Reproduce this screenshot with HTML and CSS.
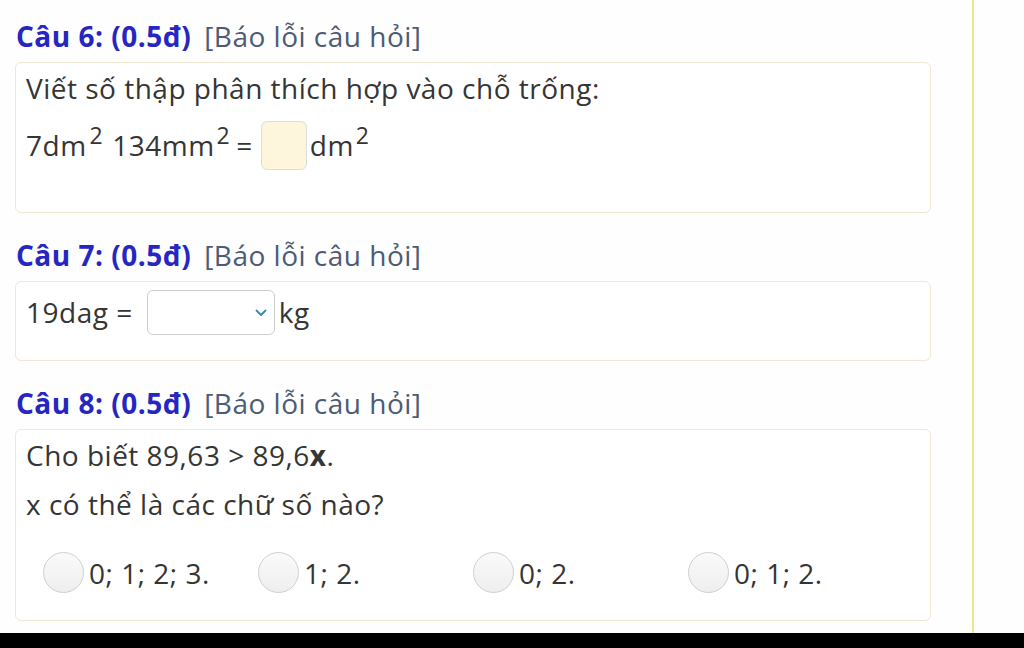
FILE: index.html
```html
<!DOCTYPE html>
<html lang="vi">
<head>
<meta charset="utf-8">
<title>Câu hỏi</title>
<link rel="stylesheet" href="styles.css">
</head>
<body>
<div class="page">
  <main class="content">
    <section class="question">
      <h3 class="q-title"><span class="q-num">Câu 6: (0.5đ)</span> <span class="q-report">[Báo lỗi câu hỏi]</span></h3>
      <div class="q-box q-box-6">
        <p class="q-line">Viết số thập phân thích hợp vào chỗ trống:</p>
        <p class="q-line q-expr">7dm<sup>2</sup> 134mm<sup>2</sup> = <span class="blank"></span>dm<sup>2</sup></p>
      </div>
    </section>
    <section class="question">
      <h3 class="q-title"><span class="q-num">Câu 7: (0.5đ)</span> <span class="q-report">[Báo lỗi câu hỏi]</span></h3>
      <div class="q-box q-box-7">
        <p class="q-line">19dag = <span class="select"><svg class="chev" viewBox="0 0 12 8" width="12" height="8"><path d="M1.5 1.5 L6 6 L10.5 1.5" fill="none" stroke="#3b87b3" stroke-width="1.8" stroke-linecap="round" stroke-linejoin="round"/></svg></span>kg</p>
      </div>
    </section>
    <section class="question">
      <h3 class="q-title"><span class="q-num">Câu 8: (0.5đ)</span> <span class="q-report">[Báo lỗi câu hỏi]</span></h3>
      <div class="q-box q-box-8">
        <p class="q-line">Cho biết 89,63 &gt; 89,6<b>x</b>.</p>
        <p class="q-line">x có thể là các chữ số nào?</p>
        <div class="options">
          <label class="option"><span class="radio"></span>0; 1; 2; 3.</label>
          <label class="option"><span class="radio"></span>1; 2.</label>
          <label class="option"><span class="radio"></span>0; 2.</label>
          <label class="option"><span class="radio"></span>0; 1; 2.</label>
        </div>
      </div>
    </section>
  </main>
  <aside class="side"></aside>
</div>
<div class="bottom-bar"></div>
</body>
</html>
```

FILE: styles.css
```css
* { box-sizing: border-box; }
html, body { margin: 0; padding: 0; }
body {
  width: 1024px;
  height: 648px;
  overflow: hidden;
  display: flex;
  flex-direction: column;
  background: #fefefe;
  font-family: "Open Sans", "Noto Sans", sans-serif;
  color: #353535;
}
.page {
  flex: 1;
  display: flex;
  min-height: 0;
}
.content {
  width: 974px;
  border-right: 2px solid #f1e48f;
  padding: 0 41px 0 15px;
}
.side { flex: 1; background: #fefefe; }
.bottom-bar { height: 15px; background: #000; }

.question { display: flex; flex-direction: column; }
.q-title {
  margin: 18px 0 8px 1px;
  line-height: 36px;
  font-size: 28px;
  font-weight: 400;
  letter-spacing: 0.5px;
}
.question + .question .q-title { margin-top: 24px; }
.q-num { color: #2626c2; font-weight: 700; }
.q-report { color: #4d5b74; margin-left: 5px; }

.q-box {
  border: 1px solid #f1e7d3;
  border-radius: 6px;
  padding: 5px 10px 0 10px;
  font-size: 28px;
  letter-spacing: 0.5px;
  background: #fff;
}
.q-line {
  margin: 0;
  line-height: 40px;
}
.q-box-6 { height: 151px; }
.q-expr { margin-top: 13px; line-height: 49px; display: flex; align-items: center; }
.q-box-7 { height: 80px; padding-top: 8px; }
.q-box-7 .q-line { display: flex; align-items: center; line-height: 45px; }
.q-box-8 { height: 192px; }
.q-box-8 .q-line + .q-line { margin-top: 9px; }

sup { font-size: 23px; line-height: 0; position: relative; top: -11px; vertical-align: baseline; }
.q-expr sup:nth-of-type(1) { margin: 0 9px 0 3px; }
.q-expr sup:nth-of-type(2) { margin: 0 6px 0 2px; }
.q-expr sup:nth-of-type(3) { margin: 0 0 0 2px; }

.blank {
  display: inline-block;
  width: 46px;
  height: 49px;
  margin: 0 3px 0 8px;
  background: #fdf5dc;
  border: 1px solid #ddd;
  border-radius: 6px;
}
.select {
  display: inline-flex;
  align-items: center;
  justify-content: flex-end;
  width: 128px;
  height: 45px;
  margin: 0 4px 0 14px;
  padding-right: 7px;
  border: 1px solid #ccc;
  border-radius: 6px;
  background: #fff;
}
.options {
  display: grid;
  grid-template-columns: repeat(4, 215px);
  padding-left: 17px;
  margin-top: 28px;
}
.option {
  display: flex;
  align-items: center;
  gap: 5px;
  height: 42px;
}
.radio {
  width: 41px;
  height: 41px;
  border-radius: 50%;
  border: 1px solid #cfcfcf;
  background: linear-gradient(#fafafa, #eeeeee);
  flex: none;
  margin-top: -2px;
}
```
